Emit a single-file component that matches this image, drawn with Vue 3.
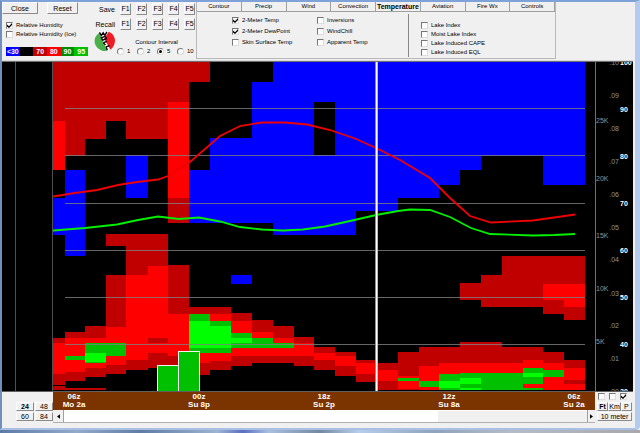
<script setup>
import { ref } from 'vue'

const layers = ref([
  { label: 'Relative Humidity', on: true },
  { label: 'Relative Humidity (Ice)', on: false },
])
const legend = [
  { text: '<30', cls: 'blue' },
  { text: '', cls: 'black' },
  { text: '70', cls: 'dark-red' },
  { text: '80', cls: 'red' },
  { text: '90', cls: 'dark-green' },
  { text: '95', cls: 'green' },
]
const slots = ['F1', 'F2', 'F3', 'F4', 'F5']
const intervals = ['1', '2', '5', '10']
const interval = ref('5')
const tabs = ['Contour', 'Precip', 'Wind', 'Convection', 'Temperature', 'Aviation', 'Fire Wx', 'Controls']
const tab = ref('Temperature')
const groups = ref([
  [
    { label: '2-Meter Temp', on: true },
    { label: '2-Meter DewPoint', on: true },
    { label: 'Skin Surface Temp', on: false },
  ],
  [
    { label: 'Inversions', on: false },
    { label: 'WindChill', on: false },
    { label: 'Apparent Temp', on: false },
  ],
  [
    { label: 'Lake Index', on: false },
    { label: 'Moist Lake Index', on: false },
    { label: 'Lake Induced CAPE', on: false },
    { label: 'Lake Induced EQL', on: false },
  ],
])

// Humidity cells per forecast step: colour key, top, bottom.
const shades = { D: '#c00000', R: '#ff0000', B: '#0000ff', g: '#00c000', G: '#00ff00' }
const edges = [53, 65, 85, 106, 126, 148, 168, 189, 210, 231, 252, 273, 294, 314, 335, 356, 377, 398, 419, 439, 460, 481, 502, 523, 543, 564, 585]
const steps = [
  'D62-121 R121-170 B198-235 D338-343 R343-374 D374-385 D386-390',
  'D62-156 B170-256 D332-338 R338-356 g356-360 R360-372 D372-381 D388-390',
  'D62-139 D326-338 R338-343 g343-353 G353-362 g362-363 R363-368 D368-377 D388-390',
  'D62-121 D234-246 D275-327 R327-343 g343-356 R356-365 D365-374',
  'D62-139 B155-198 D234-275 R275-360 D360-370',
  'D62-139 D234-266 R266-338 D338-343 R343-353 D353-368',
  'D62-102 R102-198 D198-223 D265-314 R314-356 D356-366',
  'D62-82 B170-223 D307-314 g314-321 G321-348 g348-353 R353-363 D363-375',
  'B138-223 D307-314 R314-321 g321-326 G326-348 g348-353 R353-361 D361-370',
  'B138-223 B275-284 D313-321 R321-333 g333-338 G338-343 g343-348 R348-356 D356-366',
  'B82-223 D320-332 R332-338 g338-348 R348-356 D356-363',
  'B62-235 D326-338 R338-343 g343-348 R348-356 D356-363',
  'B62-235 D337-343 R343-356 D356-366',
  'B62-102 B155-235 D347-353 R353-360 D360-370',
  'B62-235 D352-356 R356-366 D366-376',
  'B62-211 D360-363 R363-374 D374-382',
  'B62-211 D363-370 R370-381 D381-390',
  'B62-198 D352-376 R376-378 g378-381 R381-389 D389-390',
  'B62-198 D347-366 R366-381 g381-387 R387-390',
  'B62-185 D347-363 R363-374 g374-381 G381-388 g388-390',
  'B62-170 D283-300 D342-363 R363-373 g373-378 G378-384 g384-388 G388-390',
  'B62-156 D275-307 D342-363 R363-373 g373-390',
  'B62-156 D256-307 D347-363 R363-373 g373-390',
  'B62-156 D256-307 D347-360 R360-368 g368-373 G373-377 g377-384 R384-388 g388-390',
  'B62-185 D256-284 R284-300 D300-314 D352-363 R363-370 g370-377 R377-390',
  'B62-185 D256-284 R284-307 D307-320 D360-368 R368-380 D380-384 R384-390',
]
const cells = steps.flatMap((row, i) =>
  row.split(' ').map((c) => {
    const [top, bottom] = c.slice(1).split('-').map(Number)
    return { x: edges[i], w: edges[i + 1] - edges[i], y: top, h: bottom - top, fill: shades[c[0]] }
  })
)
const gridLines = [108, 155, 203, 250, 297, 344]
const temperature = '53,196.5 75,193 97,190 118,185 137,182 158,179.5 168,176 190,162 220,136 240,126 262,122.5 285,122.5 307,124.5 330,130 355,138.5 376,148 400,160 430,178 450,198 470,216 491,222.5 533,220.5 554,217.5 575,214.5'
const dewPoint = '53,230.5 85,228 117,224.5 138,220 158,216.5 179,219 199,217.5 220,221.5 240,227 262,229.5 283,230.5 303,229.5 325,226.5 350,221 376,215 398,211 410,209.5 430,210 450,217 471,228 490,234 533,235.5 554,235 575,234'

const share = (y) => ((y - 62) / 329) * 100 + '%'
const heights = [['25K', 120], ['20K', 178], ['15K', 235], ['10K', 288], ['5K', 341]]
const amounts = [['.10', 62], ['.09', 95], ['.08', 128], ['.07', 161], ['.06', 194], ['.05', 227], ['.04', 259], ['.03', 293], ['.02', 325], ['.01', 358], ['.00', 391]]
const degrees = [['100', 62], ['90', 109], ['80', 156], ['70', 203], ['60', 250], ['50', 297], ['40', 344], ['30', 391]]

const times = [['06z', 'Mo 2a'], ['00z', 'Su 8p'], ['18z', 'Su 2p'], ['12z', 'Su 8a'], ['06z', 'Su 2a']]
const ranges = ['24', '48', '60', '84']
const range = ref('24')
const units = ['Ft', 'Km', 'P']
const unit = ref('Ft')
const axes = ref([{ name: 'Feet axis', on: false }, { name: 'Kilometre axis', on: false }, { name: 'Pressure axis', on: true }])
</script>

<template>
  <div class="frame">
    <main class="window">
      <header class="toolbar">
        <section class="main-tools">
          <div class="actions">
            <button class="btn close">Close</button>
            <button class="btn reset">Reset</button>
          </div>
          <div class="layers">
            <label v-for="l in layers" :key="l.label" class="check"><input v-model="l.on" type="checkbox" />{{ l.label }}</label>
          </div>
          <div class="legend">
            <span v-for="k in legend" :key="k.cls" :class="k.cls">{{ k.text }}</span>
          </div>
        </section>

        <section class="presets">
          <div class="slots">
            <template v-for="row in ['Save', 'Recall']" :key="row">
              <span class="slot-name">{{ row }}</span>
              <button v-for="s in slots" :key="s" class="btn slot">{{ s }}</button>
            </template>
          </div>
          <div class="interval-row">
            <svg class="logo" viewBox="0 0 24 24" aria-hidden="true">
              <circle cx="12" cy="12" r="11" fill="#fff" />
              <path d="M6 3C-1 7-1 16 5 20.500C8 23 12 23.500 14 22.500Z" fill="#4cb04a" />
              <path d="M16 1.800C24 5 25.500 15 18 21.500L11 9.500Z" fill="#ee1c25" />
              <path d="M6 2.500l2 3.500 2-3 2 3 2-4M8 8.500l4-1.500 1.500 2.500-4 1.500zM10 14l4-1.500M10.500 14l2 2.500M13 18.500l4-1.500M13 18l1.500 4" fill="none" stroke="#000" stroke-width="1.5" />
            </svg>
            <fieldset class="interval">
              <legend>Contour Interval</legend>
              <div class="radios">
                <label v-for="n in intervals" :key="n" class="check"><input v-model="interval" type="radio" name="interval" :value="n" />{{ n }}</label>
              </div>
            </fieldset>
          </div>
        </section>

        <section class="tab-box">
          <nav class="tabs">
            <button v-for="t in tabs" :key="t" class="tab" :class="{ active: t === tab }" @click="tab = t">{{ t }}</button>
          </nav>
          <div class="options">
            <div v-for="(g, i) in groups" :key="i" class="group" :class="{ lake: i === 2 }">
              <label v-for="o in g" :key="o.label" class="check"><input v-model="o.on" type="checkbox" />{{ o.label }}</label>
            </div>
          </div>
        </section>
      </header>

      <section class="chart">
        <div class="gutter"></div>
        <svg class="plot" viewBox="53 62 542 329" preserveAspectRatio="none" role="img" aria-label="Relative humidity profile with temperature and dew point">
          <g shape-rendering="crispEdges">
            <rect v-for="(c, i) in cells" :key="i" :x="c.x" :y="c.y" :width="c.w" :height="c.h" :fill="c.fill" />
            <rect v-for="y in gridLines" :key="y" x="65" :y="y" width="520" height="1" fill="#808080" fill-opacity="0.8" />
          </g>
          <polyline :points="temperature" fill="none" stroke="#f00000" stroke-width="1.8" />
          <polyline :points="dewPoint" fill="none" stroke="#00f000" stroke-width="1.8" />
          <rect x="375" y="62" width="3" height="329" fill="#909090" />
          <rect x="376" y="62" width="1.4" height="329" fill="#fff" />
          <g fill="#00c000" stroke="#f4f4f4" stroke-width="1">
            <rect x="157.5" y="365.5" width="21" height="26" />
            <rect x="178.5" y="351.5" width="21" height="40" />
          </g>
        </svg>
        <svg class="scale">
          <text v-for="h in heights" :key="h[0]" class="minor" x="0" :y="share(h[1])" dy="3">{{ h[0] }}</text>
          <text v-for="a in amounts" :key="a[0]" class="minor" x="23" text-anchor="end" :y="share(a[1])" dy="3">{{ a[0] }}</text>
          <text v-for="d in degrees" :key="d[0]" class="major" x="24" :y="share(d[1])" dy="3">{{ d[0] }}</text>
        </svg>
      </section>

      <footer class="bottom">
        <div class="ranges">
          <button v-for="r in ranges" :key="r" class="btn" :class="{ active: r === range }" @click="range = r">{{ r }}</button>
        </div>
        <div class="timeline">
          <div class="times">
            <span v-for="(t, i) in times" :key="i">{{ t[0] }}<br />{{ t[1] }}</span>
          </div>
          <div class="scroller">
            <button class="arrow" aria-label="Earlier"><svg viewBox="0 0 4 6"><path d="M4 0V6L0 3Z" /></svg></button>
            <div class="track"></div>
            <div class="thumb"></div>
            <button class="arrow" aria-label="Later"><svg viewBox="0 0 4 6"><path d="M0 0V6L4 3Z" /></svg></button>
          </div>
        </div>
        <div class="units">
          <div class="axis-checks">
            <input v-for="a in axes" :key="a.name" v-model="a.on" type="checkbox" :aria-label="a.name" />
          </div>
          <div class="unit-buttons">
            <button v-for="u in units" :key="u" class="btn" :class="{ active: u === unit }" @click="unit = u">{{ u }}</button>
          </div>
          <button class="btn">10 meter</button>
        </div>
      </footer>
    </main>
    <div class="desktop"></div>
  </div>
</template>

<style>
body { margin: 0; }
</style>

<style scoped>
.frame {
  display: flex;
  flex-direction: column;
  height: 100vh;
  min-height: 300px;
  font-family: "Liberation Sans", Arial, sans-serif;
  font-size: 7px;
  line-height: 9px;
  color: #000;
  overflow: hidden;
  box-sizing: border-box;
}
.frame *, .frame *::before, .frame *::after { box-sizing: border-box; }
.window {
  flex: 1;
  min-height: 0;
  display: flex;
  flex-direction: column;
  background: #f0f0f0;
  border-style: solid;
  border-width: 2px 5px 2px 2px;
  border-color: #7fa3d8 #b4cbee #a9c0e4 #6f8fbf;
  padding: 0 2px 5px 0;
  border-bottom-right-radius: 4px;
}
button { font: inherit; color: inherit; margin: 0; padding: 0; white-space: nowrap; }
.btn {
  background: #f0f0f0;
  border: 1px solid;
  border-color: #fff #8a8a8a #8a8a8a #fff;
}
input {
  appearance: none;
  margin: 0;
  width: 7px;
  height: 7px;
  flex: none;
  background: #fff;
  border: 1px solid;
  border-color: #777 #ddd #ddd #777;
}
input[type="checkbox"]:checked::after {
  content: "";
  display: block;
  width: 5px;
  height: 5px;
  background: #000;
  clip-path: polygon(0 30%, 40% 65%, 100% 0, 100% 40%, 40% 100%, 0 70%);
}
input[type="radio"] { border-radius: 50%; }
input[type="radio"]:checked::after {
  content: "";
  display: block;
  width: 3px;
  height: 3px;
  margin: 1px;
  border-radius: 50%;
  background: #000;
}
.check { display: flex; align-items: center; gap: 3px; white-space: nowrap; font-size: 6px; }

.toolbar {
  display: flex;
  flex: none;
  height: 59px;
  border-bottom: 1px solid #d8d8d8;
}
.main-tools { width: 92px; flex: none; }
.actions { display: flex; gap: 9px; }
.actions .btn { height: 12px; }
.close { width: 36px; }
.reset { width: 31px; }
.layers { padding: 7px 0 0 4px; }
.legend {
  display: grid;
  grid-template-columns: repeat(6, 1fr);
  margin: 8px 6px 0 4px;
  color: #fff;
  font-weight: bold;
  text-align: center;
}
.legend span { height: 9px; }
.blue { background: #00f; }
.black { background: #000; }
.dark-red { background: #c00000; }
.red { background: #f00; }
.dark-green { background: #008a00; }
.green { background: #00c000; }

.presets { width: 102px; flex: none; padding-top: 1px; }
.slots {
  display: grid;
  grid-template-columns: 21px repeat(5, 11px);
  column-gap: 5px;
  row-gap: 3px;
  align-items: center;
}
.slot-name { text-align: right; }
.slot { height: 12px; line-height: 8px; }
.interval-row { display: flex; gap: 1px; }
.logo { width: 22px; height: 22px; flex: none; }
.interval { flex: 1; min-width: 0; margin: 0; padding: 8px 0 0; border: 0; }
.interval legend { float: left; width: 100%; padding: 0; text-align: center; font-size: 6px; }
.radios { clear: both; display: grid; grid-template-columns: repeat(4, 20px); }

.tab-box {
  flex: none;
  width: 360px;
  height: 57px;
  border: 1px solid #b8b8b8;
  border-top: 0;
}
.tabs { display: flex; height: 10px; border-bottom: 1px solid #a0a0a0; }
.tab {
  flex: 1;
  min-width: 0;
  background: #f0f0f0;
  border: 0;
  border-right: 1px solid #a0a0a0;
  text-align: center;
  font-size: 6px;
}
.active { font-weight: bold; }
.tab.active { font-size: 7px; }
.options { display: flex; padding: 2px 0 0 35px; }
.group { width: 85px; display: flex; flex-direction: column; gap: 2px; padding-top: 2px; }
.group:nth-child(2) { width: 91px; }
.lake { width: auto; gap: 0; border-left: 1px solid #888; padding: 7px 0 0 12px; }

.chart {
  flex: 1;
  min-height: 0;
  display: flex;
  background: #000;
  border-top: 1px solid #707070;
  border-bottom: 1px solid #606060;
}
.gutter { flex: none; width: 51px; padding-left: 13px; border-right: 1px solid #505050; }
.gutter::before { content: ""; display: block; height: 100%; border-left: 1px solid #505050; }
.plot { display: block; flex: 1; min-width: 0; width: 0; height: 100%; }
.scale { display: block; flex: none; width: 38px; height: 100%; border-left: 1px solid #707070; overflow: hidden; }
.minor { fill: #949494; font-size: 7px; }
.major { fill: #fff; font-weight: bold; font-size: 7px; }

.bottom { flex: none; display: flex; height: 31px; }
.ranges {
  flex: none;
  width: 51px;
  display: grid;
  grid-template-columns: 1fr 1fr;
  grid-template-rows: 9px 9px;
  gap: 1px;
  padding: 10px 0 0 14px;
}
.ranges .btn, .units .btn { line-height: 7px; }
.timeline { flex: 1; min-width: 0; }
.times {
  display: flex;
  justify-content: space-between;
  height: 18px;
  padding: 1px;
  background: #7b3300;
  color: #fff;
  font-size: 8px;
  font-weight: bold;
  line-height: 8px;
  text-align: center;
}
.times span { width: 40px; }
.scroller { display: flex; height: 13px; background: #f0f0f0; border-bottom: 1px solid #b0b0b0; }
.arrow {
  width: 11px;
  display: flex;
  align-items: center;
  justify-content: center;
  background: #f0f0f0;
  border: 0;
  border-right: 1px solid #a0a0a0;
}
.arrow:last-child { width: 8px; border-right: 0; border-left: 1px solid #a0a0a0; }
.arrow svg { width: 3px; height: 5px; }
.track { flex: 5; background: #fff; }
.thumb { flex: 2; border-top: 1px solid #fff; }
.units {
  flex: none;
  width: 38px;
  display: flex;
  flex-direction: column;
  gap: 1px;
  padding: 1px 1px 0 2px;
}
.axis-checks { display: flex; gap: 4px; padding: 0 1px 1px; }
.unit-buttons { display: grid; grid-template-columns: 1fr 1fr 1fr; }
.units .btn { height: 9px; }

.desktop {
  flex: none;
  height: 3px;
  background: linear-gradient(90deg, #5c7ba8 0, #93aacb 12%, #5f7da5 22%, #9db3d2 34%, #5a6fc0 38%, #a9c0e0 42%, #7488a0 50%, #b6cdec 56%, #8fa3bb 68%, #b6bcc6 80%, #a8a8ac 100%);
}
</style>
